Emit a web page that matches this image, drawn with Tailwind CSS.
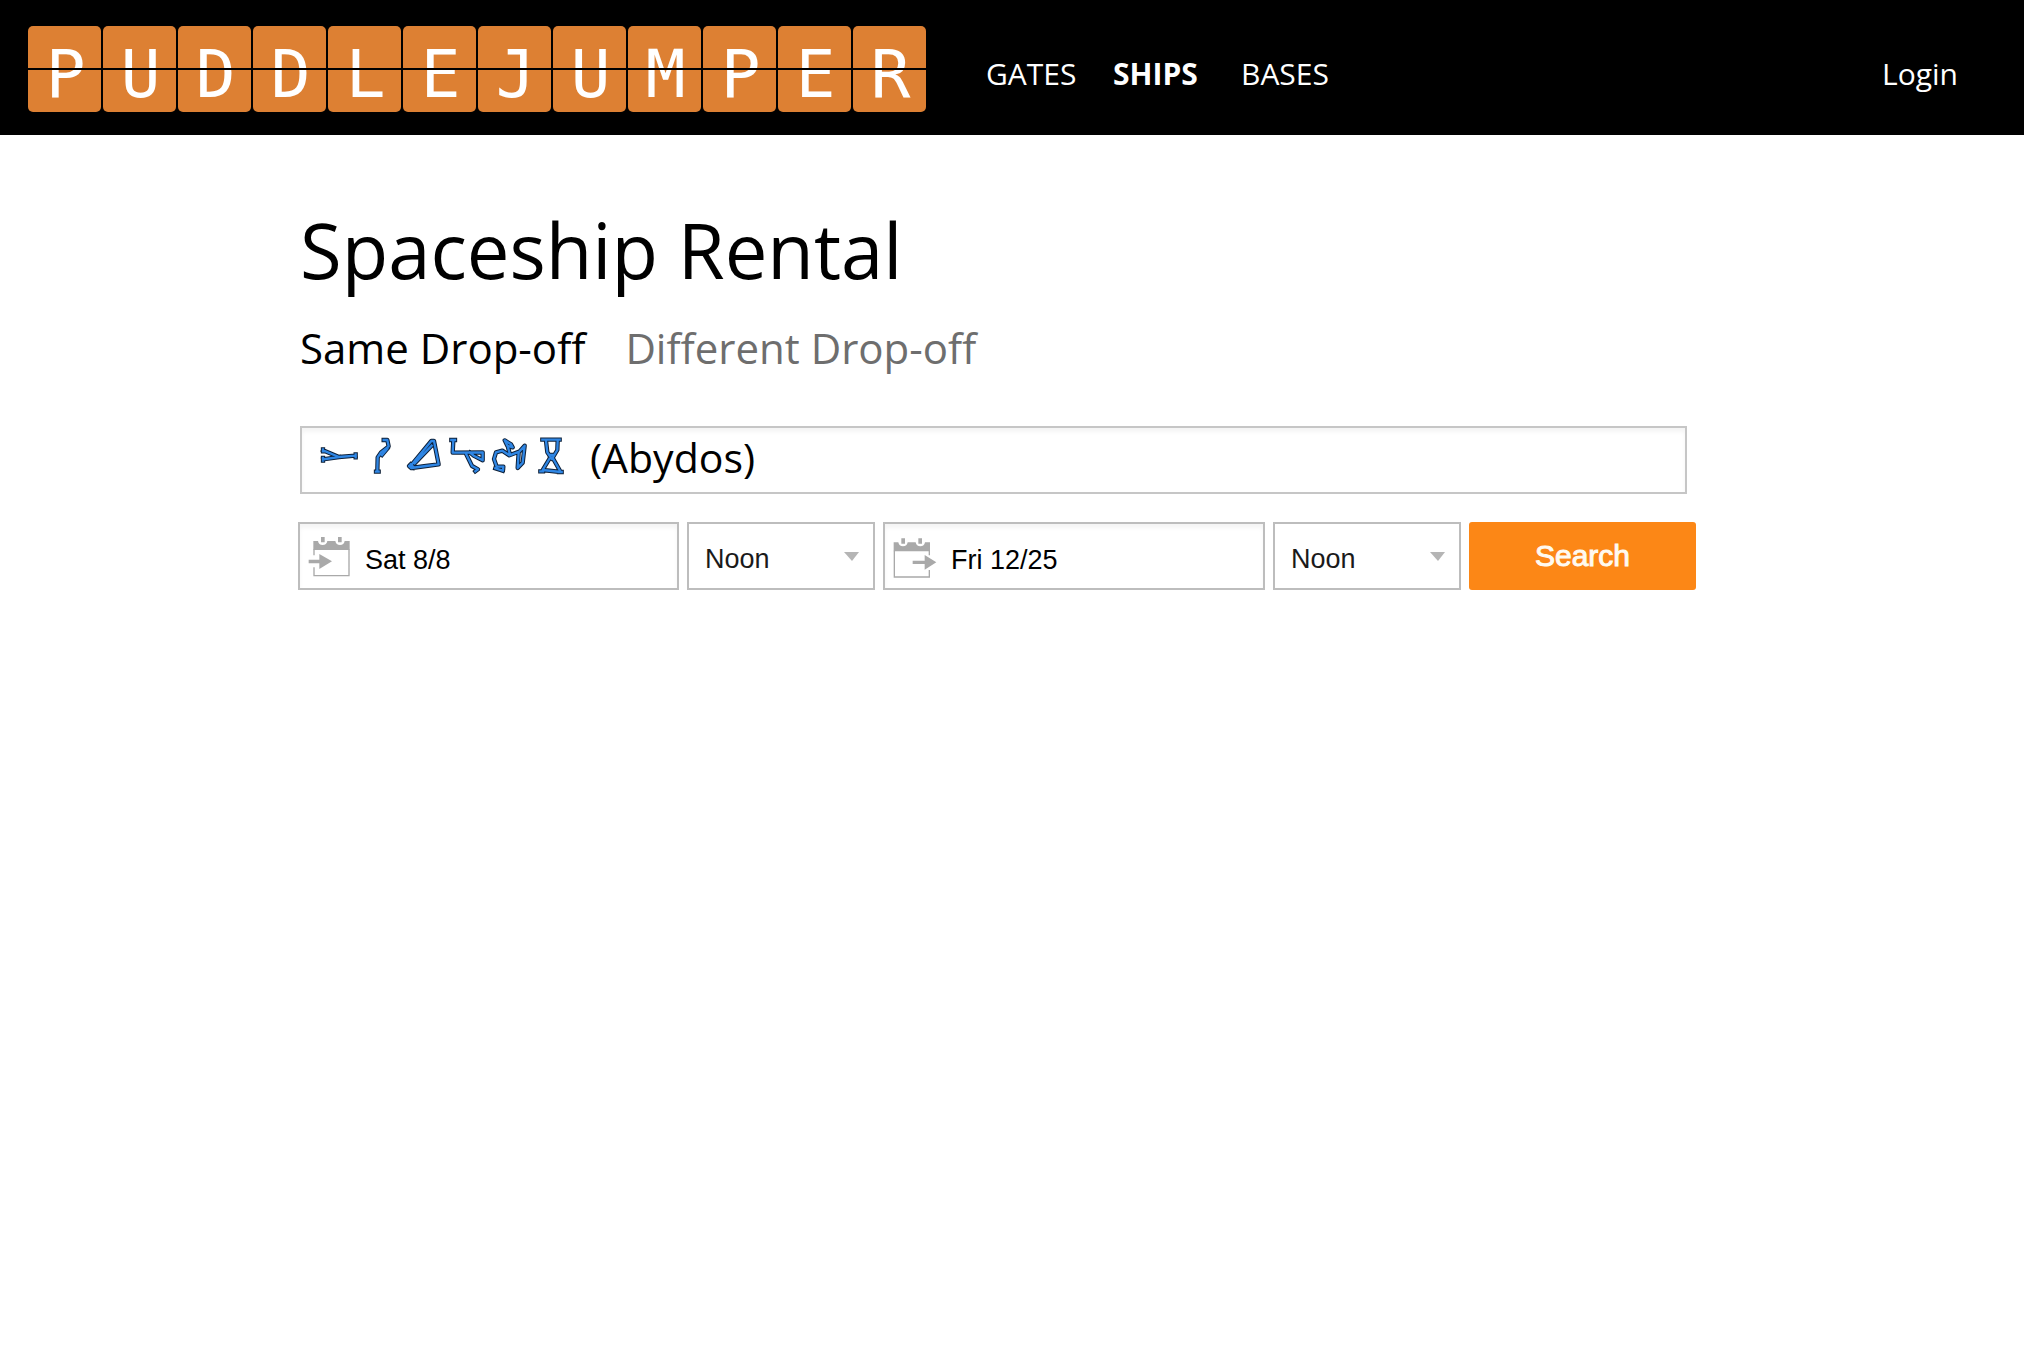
<!DOCTYPE html>
<html lang="en">
<head>
<meta charset="utf-8">
<meta name="viewport" content="width=device-width, initial-scale=1">
<title>Puddlejumper – Spaceship Rental</title>
<script src="https://cdn.jsdelivr.net/npm/@tailwindcss/browser@4"></script>
</head>
<body class="min-h-screen bg-white font-['Trebuchet_MS','Open_Sans',sans-serif] text-black">
<header class="flex h-[135px] items-center bg-black pl-7 pr-[66px] text-white">
  <a href="#" aria-label="Puddlejumper" class="relative mt-0.5 flex shrink-0 gap-0.5 font-['DejaVu_Sans_Mono',monospace] text-[66px] leading-[86px] *:h-[86px] *:w-[73px] *:rounded-[5px] *:bg-[#dd8033] *:pl-0.5 *:pt-1.5 *:text-center">
    <span>P</span><span>U</span><span>D</span><span>D</span><span>L</span><span>E</span><span>J</span><span>U</span><span>M</span><span>P</span><span>E</span><span>R</span>
    <i class="absolute inset-x-0 top-[42px] !h-0.5 !w-full !rounded-none !bg-black !p-0"></i>
  </a>
  <nav class="ml-[60px] mt-3 flex flex-1 text-[30px] leading-10">
    <a href="#" class="w-[127px]">GATES</a>
    <a href="#" aria-current="page" class="w-[128px] font-bold">SHIPS</a>
    <a href="#">BASES</a>
    <a href="#" class="ml-auto">Login</a>
  </nav>
</header>
<main class="pl-[298px] pr-[328px] pt-[67px]">
  <h1 class="pl-0.5 text-[76px] leading-[96px]">Spaceship Rental</h1>
  <div class="mt-[22px] flex gap-10 pl-0.5 text-[42px] leading-[56px]">
    <button type="button">Same Drop-off</button>
    <button type="button" class="text-[#6e6e6e]">Different Drop-off</button>
  </div>
  <form class="mt-[50px]">
    <label class="ml-0.5 mr-[9px] flex h-[68px] items-center border-2 border-[#c6c6c6] pl-4 shadow-[inset_0_4px_4px_#f5f5f5]">
      <svg class="mb-2 h-[42px] w-[250px] shrink-0" viewBox="84 60 750 126" fill="none" stroke-linejoin="round" stroke-linecap="square" aria-hidden="true">
        <defs>
          <g id="gate-address">
            <path d="M99 106 L147 126 L197 122 M99 133 L147 126 M99 103V109 M99 129V137 M197 118V127"/>
            <path d="M281 75 L292 75 L296 94 L273 112 L263 127 L262 167 M276 120 L292 101 M258 170H266"/>
            <path d="M424 78 L432 78 L446 148 L408 153 L364 159 L357 153 L366 148 Z M362 148 L372 158 M425 92 L374 145"/>
            <path d="M484 75H495 M490 76 L488 113 L578 112 L578 136 L551 122 L540 113 M528 116 L546 153 L564 163 L556 169"/>
            <path d="M639 165 L640 155 L620 155 L612 132 L618 112 L637 107 L658 121 L682 112 M616 160 L638 167 M644 76 L663 88 L668 97 L652 92 Z M654 97 L660 119 M704 92 L686 112 L683 159 L698 143 Z"/>
            <path d="M757 74 L809 74 M768 78 L772 112 L786 132 L802 105 L803 78 M779 120H789 M778 132 L758 165 L812 171 L790 132 M751 169H759 M807 171H815"/>
          </g>
        </defs>
        <use href="#gate-address" stroke="#0e2038" stroke-width="13"/>
        <use href="#gate-address" stroke="#2f86e4" stroke-width="7"/>
      </svg>
      <input type="text" value="(Abydos)" aria-label="Pick-up gate" class="mb-1 ml-[22px] h-[60px] min-w-0 flex-1 bg-transparent text-[41px] outline-none">
    </label>
    <div class="mt-[28px] grid grid-cols-[381fr_188fr_382fr_188fr_227fr] gap-2 font-['Liberation_Sans',Arial,sans-serif] text-[27px]">
      <label class="flex h-[68px] min-w-0 items-center border-2 border-[#bdbdbd] pl-2 shadow-[inset_0_4px_4px_#f5f5f5]">
        <svg class="mt-0.5 h-[42px] w-[43px] shrink-0" viewBox="54 78 129 126" fill="#a9a9a9" aria-hidden="true">
          <path d="M70 93H84Q86 105 98 105T112 93H136Q138 105 150 105T164 93H179V120H70Z"/>
          <path d="M93 81H104V97H93ZM144 81H155V97H144Z"/>
          <path d="M72 118V136M72 172V197H177V118" fill="none" stroke="#a9a9a9" stroke-width="4"/>
          <path d="M56 149H88V132L126 154L88 177V160H56Z"/>
        </svg>
        <input type="text" value="Sat 8/8" aria-label="Pick-up date" class="ml-[14px] mt-2 h-10 min-w-0 flex-1 bg-transparent outline-none">
      </label>
      <div class="relative">
        <select aria-label="Pick-up time" class="h-[68px] w-full appearance-none border-2 border-[#bdbdbd] bg-white pl-4 pt-1.5 text-[#1a1a1a]"><option>Noon</option></select>
        <svg class="pointer-events-none absolute right-4 top-[30px] h-[9px] w-[15px]" viewBox="0 0 15 9" aria-hidden="true"><path d="M0 0H15L8 9Z" fill="#b5b5b5"/></svg>
      </div>
      <label class="flex h-[68px] min-w-0 items-center border-2 border-[#bdbdbd] pl-2 shadow-[inset_0_4px_4px_#f5f5f5]">
        <svg class="mt-1 h-[42px] w-[44px] shrink-0" viewBox="639 81 132 126" fill="#a9a9a9" aria-hidden="true">
          <path d="M641 97H655Q657 109 669 109T683 97H707Q709 109 721 109T735 97H750V124H641Z"/>
          <path d="M664 85H675V101H664ZM715 85H726V101H715Z"/>
          <path d="M748 122V136M748 180V201H643V122" fill="none" stroke="#a9a9a9" stroke-width="4"/>
          <path d="M698 152H734V135L769 157L734 179V162H698Z"/>
        </svg>
        <input type="text" value="Fri 12/25" aria-label="Drop-off date" class="ml-[14px] mt-2 h-10 min-w-0 flex-1 bg-transparent outline-none">
      </label>
      <div class="relative">
        <select aria-label="Drop-off time" class="h-[68px] w-full appearance-none border-2 border-[#bdbdbd] bg-white pl-4 pt-1.5 text-[#1a1a1a]"><option>Noon</option></select>
        <svg class="pointer-events-none absolute right-4 top-[30px] h-[9px] w-[15px]" viewBox="0 0 15 9" aria-hidden="true"><path d="M0 0H15L8 9Z" fill="#b5b5b5"/></svg>
      </div>
      <button type="submit" class="h-[68px] rounded-[3px] bg-[#fc8716] pb-0.5 text-[30px] text-[#fffaf0] [-webkit-text-stroke:1px_#fffaf0]">Search</button>
    </div>
  </form>
</main>
</body>
</html>
